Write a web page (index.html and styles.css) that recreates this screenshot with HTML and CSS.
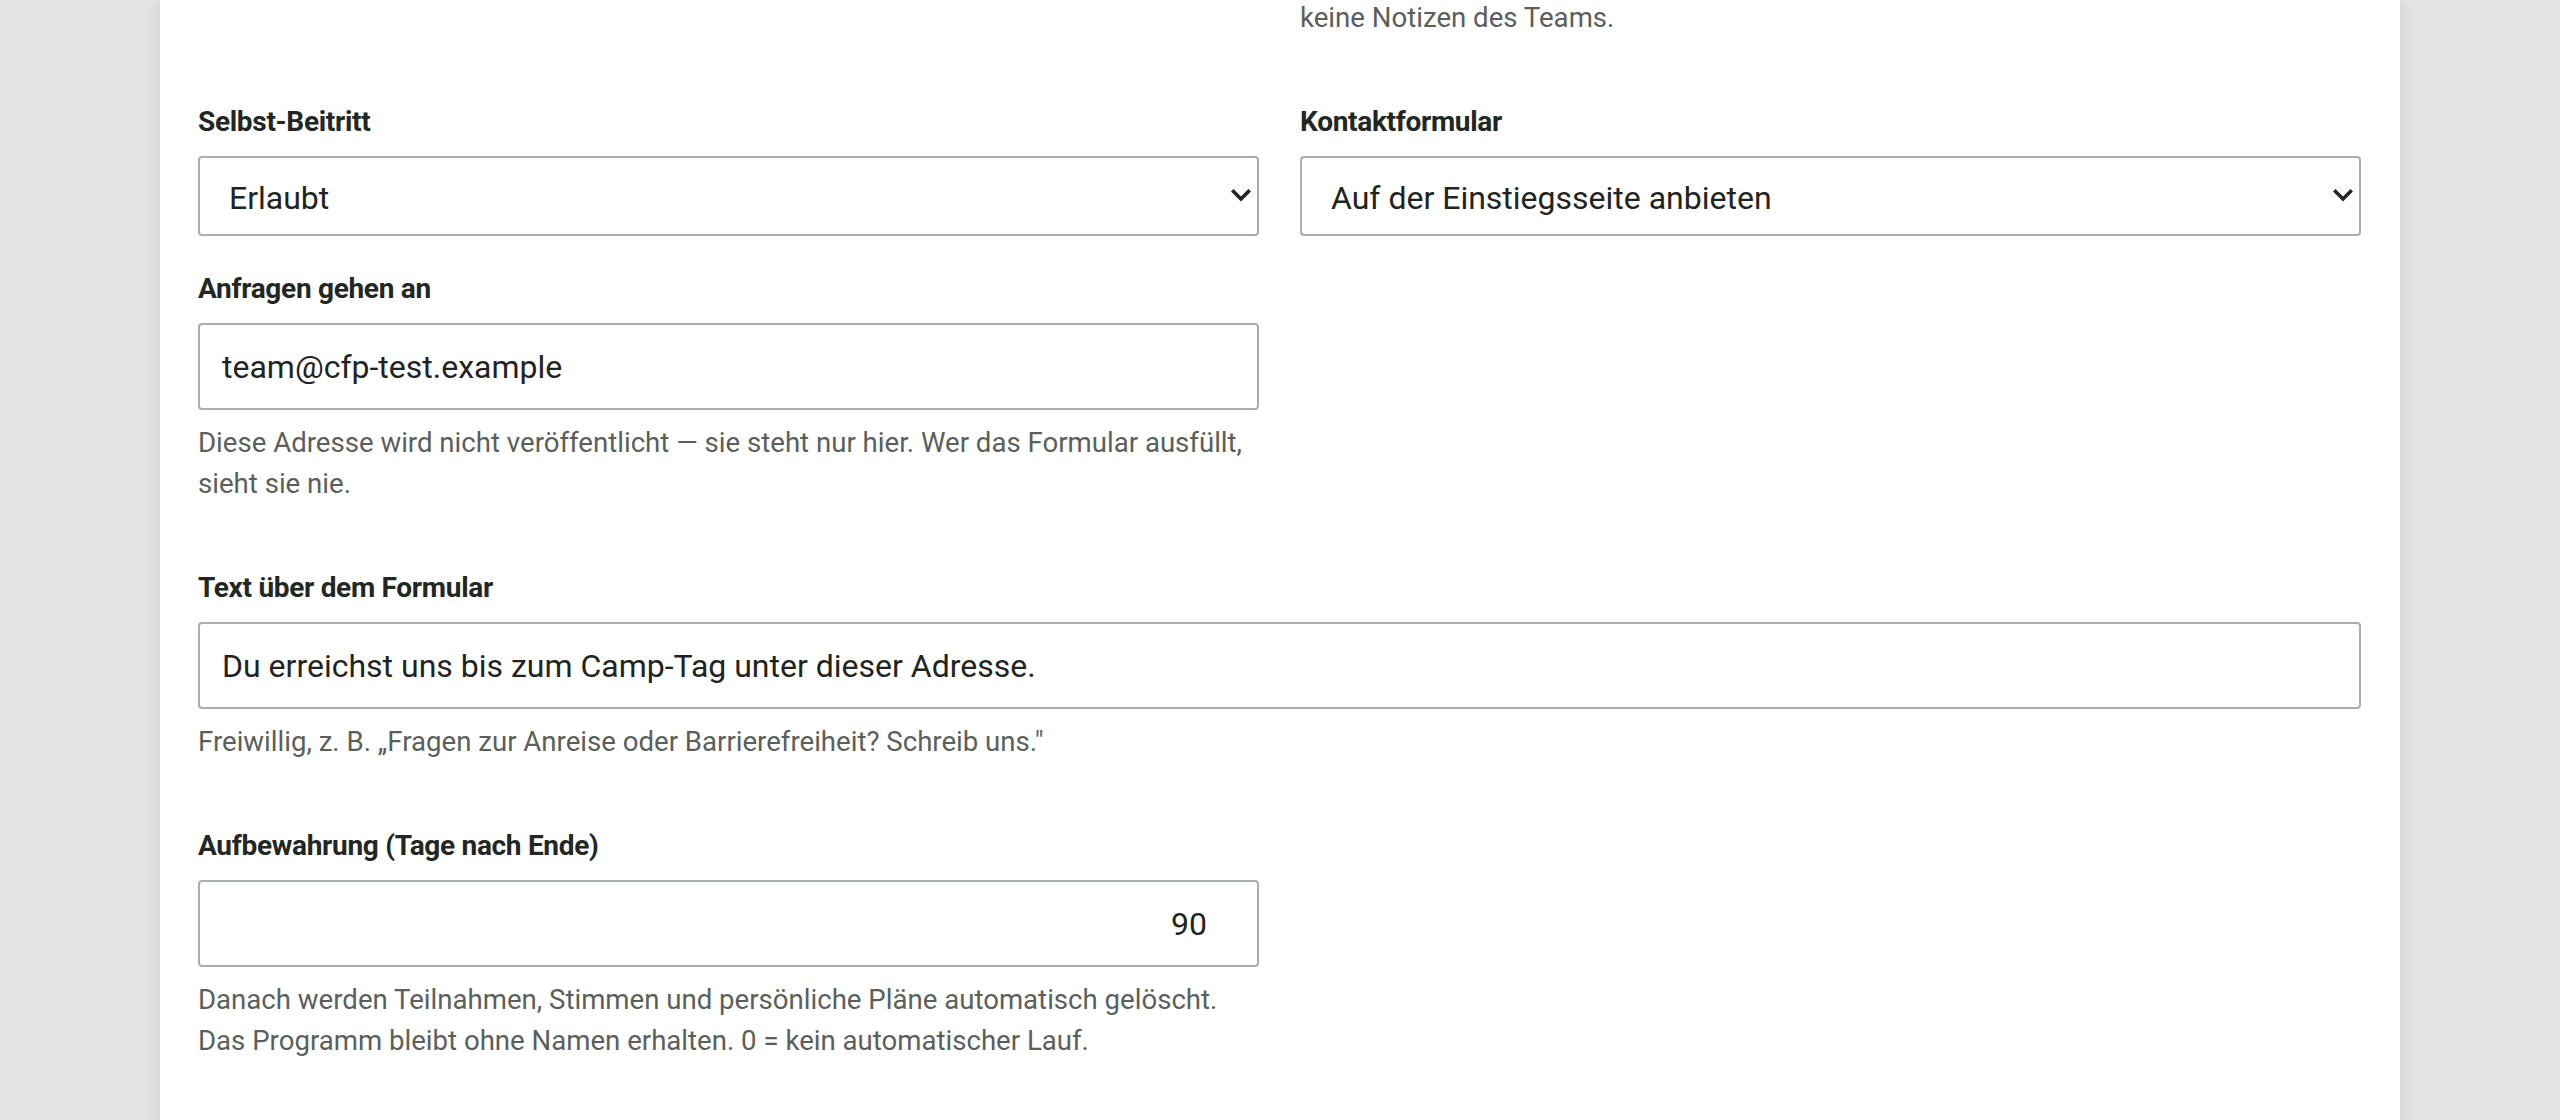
FILE: index.html
```html
<!DOCTYPE html>
<html lang="de">
<head>
<meta charset="utf-8">
<title>Einstellungen</title>
<link rel="stylesheet" href="styles.css">
</head>
<body>
<main class="card">
  <div class="grid">
    <div class="field"></div>
    <div class="field">
      <p class="help help-tail">keine Notizen des Teams.</p>
    </div>

    <div class="field">
      <label class="label" for="join">Selbst-Beitritt</label>
      <div class="select-wrap">
        <select id="join" class="control select">
          <option>Erlaubt</option>
        </select>
        <svg class="chevron" width="20" height="14" viewBox="0 0 20 14" aria-hidden="true"><path d="M2.5 2.5 L10 10 L17.5 2.5" fill="none" stroke="#222624" stroke-width="3.6" stroke-linecap="square" stroke-linejoin="miter"/></svg>
      </div>
    </div>
    <div class="field">
      <label class="label" for="contact">Kontaktformular</label>
      <div class="select-wrap">
        <select id="contact" class="control select">
          <option>Auf der Einstiegsseite anbieten</option>
        </select>
        <svg class="chevron" width="20" height="14" viewBox="0 0 20 14" aria-hidden="true"><path d="M2.5 2.5 L10 10 L17.5 2.5" fill="none" stroke="#222624" stroke-width="3.6" stroke-linecap="square" stroke-linejoin="miter"/></svg>
      </div>
    </div>

    <div class="field">
      <label class="label" for="mail">Anfragen gehen an</label>
      <input id="mail" class="control input" type="email" value="team@cfp-test.example">
      <p class="help">Diese Adresse wird nicht veröffentlicht — sie steht nur hier. Wer das Formular ausfüllt, sieht sie nie.</p>
    </div>
    <div class="field"></div>

    <div class="field field-wide">
      <label class="label" for="intro">Text über dem Formular</label>
      <input id="intro" class="control input" type="text" value="Du erreichst uns bis zum Camp-Tag unter dieser Adresse.">
      <p class="help">Freiwillig, z. B. „Fragen zur Anreise oder Barrierefreiheit? Schreib uns."</p>
    </div>

    <div class="field">
      <label class="label" for="keep">Aufbewahrung (Tage nach Ende)</label>
      <input id="keep" class="control input input-number" type="number" value="90">
      <p class="help">Danach werden Teilnahmen, Stimmen und persönliche Pläne automatisch gelöscht. Das Programm bleibt ohne Namen erhalten. 0 = kein automatischer Lauf.</p>
    </div>
    <div class="field"></div>
  </div>
</main>
</body>
</html>
```

FILE: styles.css
```css
html, body {
  margin: 0;
  padding: 0;
}

body {
  background: #e4e6e3;
  font-family: Roboto, "Noto Sans", "Liberation Sans", sans-serif;
  color: #1f2421;
  height: 1120px;
  overflow: hidden;
}

.card {
  width: 2240px;
  margin: 0 auto;
  box-sizing: border-box;
  min-height: 1200px;
  background: #ffffff;
  padding: 0 39px 60px 38px;
  box-shadow: 0 0 22px rgba(0, 0, 0, 0.10);
}

.grid {
  display: grid;
  grid-template-columns: 1fr 1fr;
  column-gap: 41px;
  row-gap: 36px;
}

.field {
  display: flex;
  flex-direction: column;
  min-width: 0;
}

.field-wide {
  grid-column: 1 / -1;
}

.label {
  display: block;
  font-family: Roboto, "Liberation Sans", sans-serif;
  font-weight: 700;
  font-size: 28px;
  line-height: 34px;
  letter-spacing: -0.3px;
  color: #222723;
  margin: 0 0 17px;
}

.control {
  box-sizing: border-box;
  width: 100%;
  margin: 0;
  border: 2px solid #a9b0ac;
  border-radius: 4px;
  background: #ffffff;
  color: #1f2421;
  font-family: Roboto, "Noto Sans", "Liberation Sans", sans-serif;
  font-size: 32px;
  outline: none;
}

.input {
  height: 87px;
  padding: 0 22px;
}

.input-number {
  text-align: right;
  padding-right: 50px;
  -moz-appearance: textfield;
  appearance: textfield;
}

.input-number::-webkit-inner-spin-button,
.input-number::-webkit-outer-spin-button {
  -webkit-appearance: none;
  margin: 0;
}

.select-wrap {
  position: relative;
}

.select {
  height: 80px;
  padding: 4px 60px 0 29px;
  -webkit-appearance: none;
  appearance: none;
}

.chevron {
  position: absolute;
  right: 8px;
  top: 33px;
  pointer-events: none;
}

.help {
  margin: 12px 0 31px;
  font-size: 27.6px;
  line-height: 41px;
  color: #5a5f5c;
}

.help-tail {
  margin-top: -3px;
}
```
